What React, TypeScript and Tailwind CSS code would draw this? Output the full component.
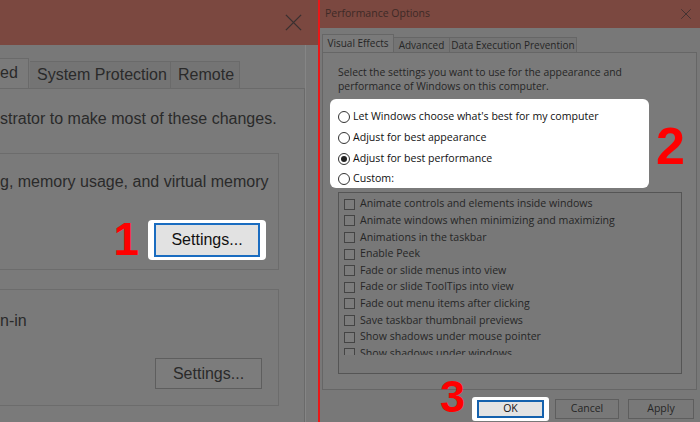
import React from 'react';

const effects = [
  'Animate controls and elements inside windows',
  'Animate windows when minimizing and maximizing',
  'Animations in the taskbar',
  'Enable Peek',
  'Fade or slide menus into view',
  'Fade or slide ToolTips into view',
  'Fade out menu items after clicking',
  'Save taskbar thumbnail previews',
  'Show shadows under mouse pointer',
  'Show shadows under windows',
];

const radios = [
  { label: "Let Windows choose what's best for my computer", checked: false },
  { label: 'Adjust for best appearance', checked: false },
  { label: 'Adjust for best performance', checked: true },
  { label: 'Custom:', checked: false },
];

const CloseX = ({ size, color }: { size: number; color: string }) => (
  <svg width={size} height={size} viewBox="0 0 20 20">
    <path d="M2 2 L18 18 M18 2 L2 18" stroke={color} strokeWidth="1.4" fill="none" />
  </svg>
);

const LeftWindow = () => (
  <div className="w-[318px] h-full flex flex-col bg-[#787878] font-['Liberation_Sans',Arial,sans-serif] text-[#2a2a2a]">
    <div className="h-[45px] bg-[#7b4840] flex items-center justify-end pr-[15px]">
      <CloseX size={19} color="#3a3030" />
    </div>
    <div className="flex-1 flex">
      <div className="w-[305px] flex flex-col pt-[13px]">
        <div className="h-[30px] flex items-end text-[16px]">
          <div className="w-[29px] h-[30px] bg-[#7a7a7a] border-r border-t border-[#6a6a6a] flex items-center pb-[2px]">ed</div>
          <div className="w-[141px] h-[27px] bg-[#747474] border-r border-t border-[#6a6a6a] ml-[1px] flex items-center pl-[7px]">System Protection</div>
          <div className="w-[69px] h-[27px] bg-[#747474] border-r border-t border-[#6a6a6a] flex items-center pl-[7px]">Remote</div>
        </div>
        <div className="flex-1 bg-[#7a7a7a] border-t border-r border-[#6a6a6a] pt-[20px] text-[16px]">
          <div className="h-[20px] leading-[20px]">strator to make most of these changes.</div>
          <div className="mt-[24px] w-[279px] h-[117px] border border-l-0 border-[#6c6c6c] pt-[18px]">
            <div className="h-[20px] leading-[20px]">g, memory usage, and virtual memory</div>
            <div className="mt-[26px] flex items-center justify-end pr-[12px]">
              <span className="text-[46px] leading-none font-bold text-[#ff0000] mr-[9px] mt-[-2px]">1</span>
              <div className="bg-white rounded-[4px] px-[6px] py-[3px]">
                <div className="w-[106px] h-[34px] bg-[#e2e2e2] border-2 border-[#1a6cc0] flex items-center justify-center text-[16px] text-[#111]">Settings...</div>
              </div>
            </div>
          </div>
          <div className="mt-[19px] w-[279px] h-[117px] border border-l-0 border-[#6c6c6c] pt-[21px]">
            <div className="h-[20px] leading-[20px]">n-in</div>
            <div className="mt-[27px] flex justify-end pr-[16px]">
              <div className="w-[107px] h-[31px] bg-[#7c7c7c] border border-[#5e5e5e] flex items-center justify-center">Settings...</div>
            </div>
          </div>
        </div>
      </div>
      <div className="w-[13px] border-l border-[#858585] bg-[#787878]" />
    </div>
  </div>
);

const RightWindow = () => (
  <div className="relative flex-1 h-full flex flex-col bg-[#787878] border-l-2 border-[#e81818] font-['Open_Sans','Noto_Sans',sans-serif] text-[#262626]">
    <div className="h-[28px] bg-[#7b4840] flex items-center justify-between pl-[5px] pr-[8px]">
      <span className="text-[10.5px] text-[#3e2a27] whitespace-nowrap">Performance Options</span>
      <CloseX size={12} color="#3a3030" />
    </div>
    <div className="flex-1 flex flex-col px-[2px] pt-[6px]">
      <div className="h-[18px] flex items-end text-[10px] whitespace-nowrap">
        <div className="w-[72px] h-[18px] bg-[#7a7a7a] border border-b-0 border-[#666] flex items-center justify-center">Visual Effects</div>
        <div className="w-[56px] h-[15px] bg-[#747474] border-t border-r border-[#666] flex items-center justify-center">Advanced</div>
        <div className="w-[127px] h-[15px] bg-[#747474] border-t border-r border-[#666] flex items-center justify-center">Data Execution Prevention</div>
      </div>
      <div className="w-[375px] h-[338px] bg-[#7a7a7a] border border-[#666] pl-[15px] pt-[12px]">
        <div className="text-[10.4px] leading-[14px] whitespace-nowrap">
          <div>Select the settings you want to use for the appearance and</div>
          <div>performance of Windows on this computer.</div>
        </div>
        <div className="mt-[6px] flex items-center">
          <div className="ml-[-8px] w-[319px] h-[89px] bg-white rounded-[6px] pl-[8px] pt-[8px] text-[10.6px] text-[#111] whitespace-nowrap">
            {radios.map((r) => (
              <div key={r.label} className="h-[20.7px] flex items-center gap-[3px]">
                <span className="w-[12px] h-[12px] rounded-full border border-[#333] flex items-center justify-center">
                  {r.checked && <span className="w-[6px] h-[6px] rounded-full bg-[#222]" />}
                </span>
                <span>{r.label}</span>
              </div>
            ))}
          </div>
          <span className="ml-[7px] mt-[4px] text-[52px] leading-none font-bold text-[#ff0000] font-['Liberation_Sans',Arial,sans-serif]">2</span>
        </div>
        <div className="mt-[4px] w-[344px] h-[182px] border border-[#555] bg-[#787878]">
          <div className="h-[162px] overflow-hidden pl-[5px] pt-[3px] text-[10.6px] whitespace-nowrap">
            {effects.map((e) => (
              <div key={e} className="h-[16.6px] flex items-center gap-[5px]">
                <span className="w-[11px] h-[11px] border border-[#444] bg-[#7c7c7c]" />
                <span>{e}</span>
              </div>
            ))}
          </div>
        </div>
      </div>
      <div className="flex items-center justify-end pr-[4px] mt-[7px] text-[10.5px]">
        <div className="bg-white rounded-[3px] px-[5px] py-[3px]">
          <div className="w-[67px] h-[18px] bg-[#e3e3e3] border-2 border-[#1461ad] flex items-center justify-center text-[#111]">OK</div>
        </div>
        <div className="ml-[6px] w-[64px] h-[20px] bg-[#787878] border border-[#5e5e5e] flex items-center justify-center">Cancel</div>
        <div className="ml-[9px] w-[66px] h-[20px] bg-[#787878] border border-[#5e5e5e] flex items-center justify-center">Apply</div>
      </div>
    </div>
    <span className="absolute left-[120px] top-[374px] text-[45px] leading-none font-bold text-[#ff0000] font-['Liberation_Sans',Arial,sans-serif]">3</span>
  </div>
);

export default function App() {
  return (
    <div className="w-[700px] h-[422px] flex overflow-hidden bg-[#787878]">
      <LeftWindow />
      <RightWindow />
    </div>
  );
}
